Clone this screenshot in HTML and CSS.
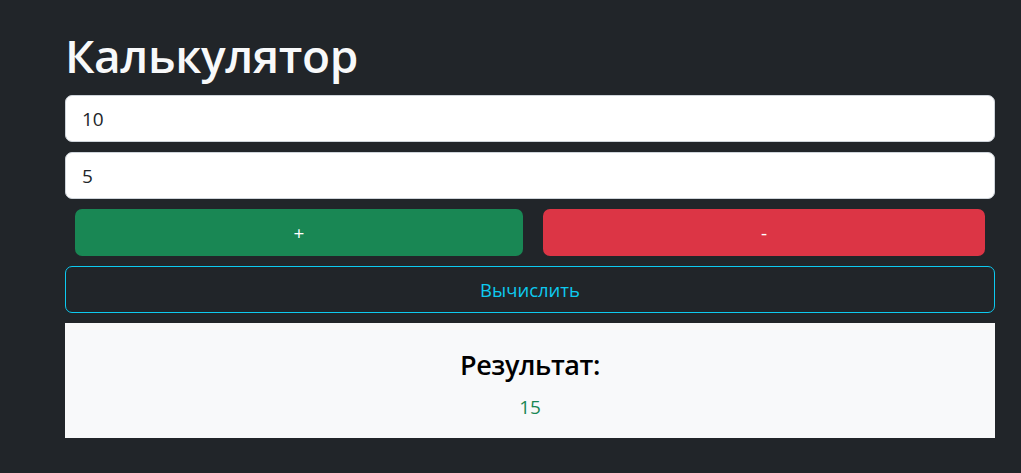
FILE: index.html
```html
<!DOCTYPE html>
<html lang="ru">
<head>
<meta charset="utf-8">
<title>Калькулятор</title>
<link rel="stylesheet" href="styles.css">
</head>
<body>
<main class="container">
  <h1 class="title">Калькулятор</h1>
  <input class="field" type="text" value="10">
  <input class="field" type="text" value="5">
  <div class="ops">
    <button class="btn btn-plus">+</button>
    <button class="btn btn-minus">-</button>
  </div>
  <button class="btn btn-calc">Вычислить</button>
  <section class="result">
    <h3 class="result-title">Результат:</h3>
    <p class="result-value">15</p>
  </section>
</main>
</body>
</html>
```
FILE: styles.css
```css
* { box-sizing: border-box; }
html, body { margin: 0; padding: 0; }
body {
  background: #212529;
  font-family: "Open Sans", "Noto Sans", sans-serif;
  color: #f8f9fa;
  height: 473px;
  overflow: hidden;
}
.container {
  width: 930px;
  margin: 0 0 0 65px;
  padding-top: 25px;
  display: flex;
  flex-direction: column;
  gap: 10px;
}
.title {
  margin: 0;
  font-size: 46px;
  font-weight: 600;
  line-height: 60px;
  color: #f8f9fa;
  letter-spacing: -0.4px;
}
.field {
  display: block;
  width: 100%;
  height: 47px;
  border: 1px solid #ced4da;
  border-radius: 7px;
  background: #fff;
  padding: 0 16px;
  font-family: inherit;
  font-size: 19px;
  color: #212529;
}
.ops {
  display: flex;
  gap: 20px;
  padding: 0 10px;
}
.btn {
  height: 47px;
  border: none;
  border-radius: 7px;
  font-family: inherit;
  font-size: 19px;
  color: #fff;
  cursor: pointer;
}
.btn-plus { flex: 448 1 0; background: #198754; }
.btn-minus { flex: 442 1 0; background: #dc3545; }
.btn-calc {
  width: 100%;
  background: transparent;
  border: 1px solid #0dcaf0;
  color: #0dcaf0;
  font-size: 18.5px;
}
.result {
  background: #f8f9fa;
  height: 115px;
  padding-top: 22px;
  text-align: center;
}
.result-title {
  margin: 0;
  font-size: 27px;
  font-weight: 600;
  line-height: 40px;
  color: #000;
  letter-spacing: -0.4px;
}
.result-value {
  margin: 8px 0 0;
  font-size: 19px;
  line-height: 28px;
  color: #198754;
}
```
